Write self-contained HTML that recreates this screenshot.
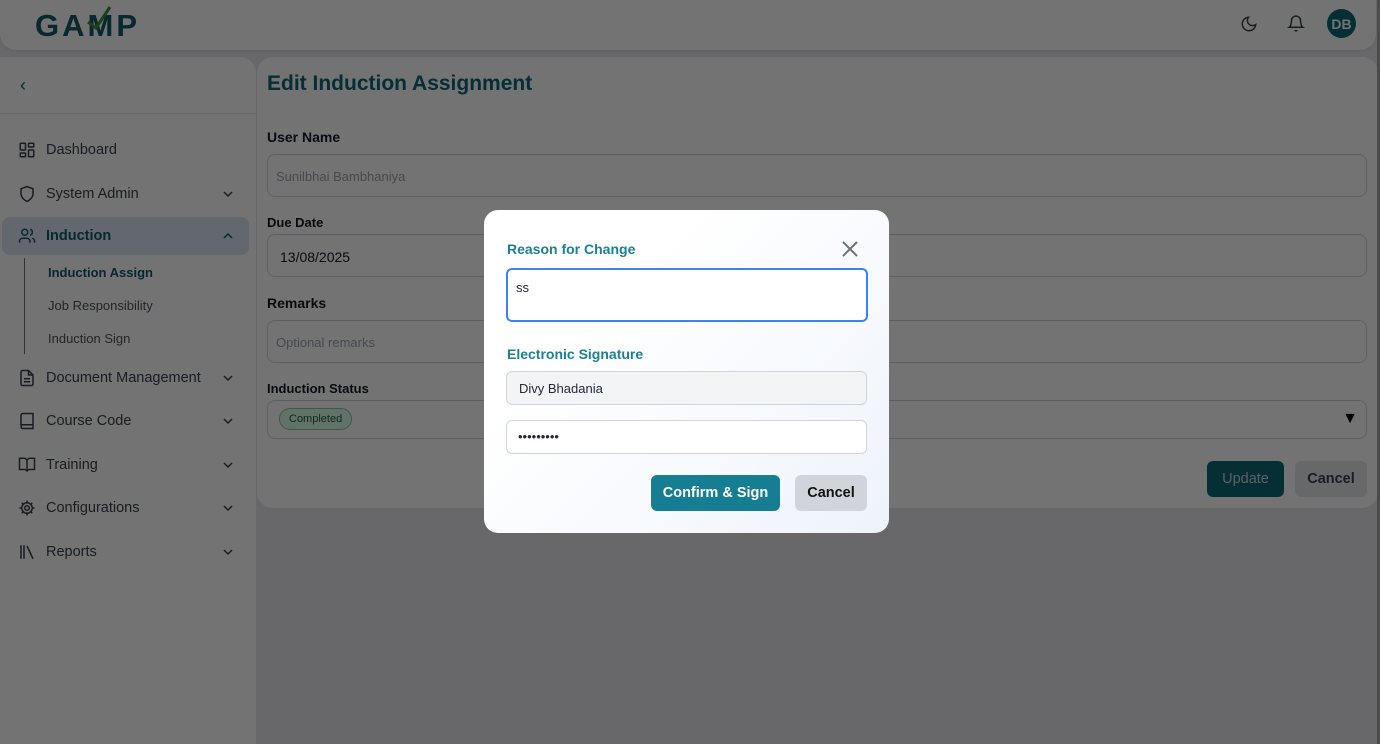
<!DOCTYPE html>
<html><head><meta charset="utf-8"><style>
*{box-sizing:border-box;margin:0;padding:0}
html,body{width:1380px;height:744px;overflow:hidden}
body{background:#e6e7ea;font-family:"Liberation Sans",sans-serif;position:relative;color:#1f2937}
.hdr{position:absolute;left:0;top:0;width:1376px;height:50px;background:#fff;border-radius:0 0 16px 16px;box-shadow:0 1px 3px rgba(0,0,0,.08)}
.logo{position:absolute;left:35px;top:8px;font-size:31px;font-weight:bold;color:#0f5a66;letter-spacing:3px}
.side{position:absolute;left:0;top:57px;width:256px;height:687px;background:#fff;border-radius:0 16px 0 0}
.side .back{position:absolute;left:20px;top:18px;color:#0f5a66;font-size:18px}
.side .sep{position:absolute;left:0;top:56px;width:256px;border-top:1px solid #e5e7eb}
.item{position:absolute;left:2px;width:247px;height:38px;font-size:14.5px;color:#374151;display:flex;align-items:center;padding-left:44px;border-radius:8px}
.item svg.ic{position:absolute;left:16px;top:10px}
.item .chev{position:absolute;right:16px;top:15px}
.act{background:#dbe7f3;color:#0f5a66;font-weight:bold}
.sub{position:absolute;left:48px;font-size:13px;color:#4b5563}
.vline{position:absolute;left:24px;top:258px;height:96px;border-left:1px solid #6b7280}
.card{position:absolute;left:257px;top:57px;width:1121px;height:451px;background:#fff;border-radius:16px}
.title{position:absolute;left:10px;top:15px;font-size:21px;color:#0f6777;font-weight:bold}
.lbl{position:absolute;left:10px;font-size:14px;font-weight:bold;color:#111827}
.inp{position:absolute;left:10px;width:1100px;height:43px;border:1px solid #d1d5db;border-radius:8px;font-size:13px;padding:14px 8px;color:#9ca3af}
.overlay{position:absolute;left:0;top:0;width:1380px;height:744px;background:rgba(0,0,0,.55)}
.modal{position:absolute;left:484px;top:210px;width:405px;height:323px;border-radius:14px;background:linear-gradient(135deg,#fff 30%,#eef3fb);}
.ml{position:absolute;left:23px;font-size:14px;font-weight:bold;color:#1a7f93}
.btn{position:absolute;height:36px;border-radius:6px;font-size:14.5px;font-weight:bold;display:flex;align-items:center;justify-content:center}
.sb{position:absolute;right:0;top:0;width:3px;height:744px;background:#4a4a4a}
</style></head><body>
<div class="hdr">
<div class="logo">GAMP</div>
<svg style="position:absolute;left:84px;top:4px" width="30" height="26"><path d="M4 18 L12 24 L26 3" stroke="#3f8f3a" stroke-width="3" fill="none"/></svg>
<svg style="position:absolute;left:1240px;top:15px" width="18" height="18" viewBox="0 0 24 24" fill="none" stroke="#374151" stroke-width="2"><path d="M21 12.8A9 9 0 1 1 11.2 3a7 7 0 0 0 9.8 9.8z"/></svg>
<svg style="position:absolute;left:1287px;top:14px" width="18" height="19" viewBox="0 0 24 24" fill="none" stroke="#374151" stroke-width="2"><path d="M18 8a6 6 0 0 0-12 0c0 7-3 9-3 9h18s-3-2-3-9M13.7 21a2 2 0 0 1-3.4 0"/></svg>
<div style="position:absolute;left:1327px;top:9px;width:29px;height:29px;border-radius:50%;background:#0f6777;color:#fff;font-size:14px;font-weight:bold;display:flex;align-items:center;justify-content:center">DB</div>
</div>
<div class="side">
<div class="back">‹</div><div class="sep"></div>
</div>
<div class="item" style="top:131px"><svg class="ic" width="18" height="18" viewBox="0 0 24 24" fill="none" stroke="#374151" stroke-width="2"><rect x="3" y="3" width="7" height="9" rx="1"/><rect x="14" y="3" width="7" height="5" rx="1"/><rect x="14" y="12" width="7" height="9" rx="1"/><rect x="3" y="16" width="7" height="5" rx="1"/></svg>Dashboard</div>
<div class="item" style="top:175px"><svg class="ic" width="18" height="18" viewBox="0 0 24 24" fill="none" stroke="#374151" stroke-width="2"><path d="M12 22s8-4 8-10V5l-8-3-8 3v7c0 6 8 10 8 10z"/></svg>System Admin<svg class="chev" width="10" height="8"><path d="M1 2l4 4 4-4" stroke="#374151" fill="none" stroke-width="1.5"/></svg></div>
<div class="item act" style="top:217px"><svg class="ic" width="18" height="18" viewBox="0 0 24 24" fill="none" stroke="#0f5a66" stroke-width="2"><path d="M16 21v-2a4 4 0 0 0-4-4H6a4 4 0 0 0-4 4v2"/><circle cx="9" cy="7" r="4"/><path d="M22 21v-2a4 4 0 0 0-3-3.9M16 3.1a4 4 0 0 1 0 7.8"/></svg>Induction<svg class="chev" width="10" height="8"><path d="M1 6l4-4 4 4" stroke="#0f5a66" fill="none" stroke-width="1.5"/></svg></div>
<div class="vline"></div>
<div class="sub" style="top:265px;color:#0f5a66;font-weight:bold">Induction Assign</div>
<div class="sub" style="top:298px">Job Responsibility</div>
<div class="sub" style="top:331px">Induction Sign</div>
<div class="item" style="top:359px"><svg class="ic" width="18" height="18" viewBox="0 0 24 24" fill="none" stroke="#374151" stroke-width="2"><path d="M14 2H6a2 2 0 0 0-2 2v16a2 2 0 0 0 2 2h12a2 2 0 0 0 2-2V8z"/><path d="M14 2v6h6M16 13H8M16 17H8"/></svg>Document Management<svg class="chev" width="10" height="8"><path d="M1 2l4 4 4-4" stroke="#374151" fill="none" stroke-width="1.5"/></svg></div>
<div class="item" style="top:402px"><svg class="ic" width="18" height="18" viewBox="0 0 24 24" fill="none" stroke="#374151" stroke-width="2"><path d="M4 19.5A2.5 2.5 0 0 1 6.5 17H20V2H6.5A2.5 2.5 0 0 0 4 4.5v15A2.5 2.5 0 0 0 6.5 22H20v-5"/></svg>Course Code<svg class="chev" width="10" height="8"><path d="M1 2l4 4 4-4" stroke="#374151" fill="none" stroke-width="1.5"/></svg></div>
<div class="item" style="top:446px"><svg class="ic" width="18" height="18" viewBox="0 0 24 24" fill="none" stroke="#374151" stroke-width="2"><path d="M2 3h6a4 4 0 0 1 4 4v14a3 3 0 0 0-3-3H2zM22 3h-6a4 4 0 0 0-4 4v14a3 3 0 0 1 3-3h7z"/></svg>Training<svg class="chev" width="10" height="8"><path d="M1 2l4 4 4-4" stroke="#374151" fill="none" stroke-width="1.5"/></svg></div>
<div class="item" style="top:489px"><svg class="ic" width="18" height="18" viewBox="0 0 24 24" fill="none" stroke="#374151" stroke-width="2"><circle cx="12" cy="12" r="3"/><circle cx="12" cy="12" r="7"/><path d="M12 2v3M12 19v3M2 12h3M19 12h3M5 5l2 2M17 17l2 2M5 19l2-2M17 7l2-2"/></svg>Configurations<svg class="chev" width="10" height="8"><path d="M1 2l4 4 4-4" stroke="#374151" fill="none" stroke-width="1.5"/></svg></div>
<div class="item" style="top:533px"><svg class="ic" width="18" height="18" viewBox="0 0 24 24" fill="none" stroke="#374151" stroke-width="2"><path d="M4 3v18M8 3v18M12 4l8 17"/></svg>Reports<svg class="chev" width="10" height="8"><path d="M1 2l4 4 4-4" stroke="#374151" fill="none" stroke-width="1.5"/></svg></div>
<div class="card">
<div class="title">Edit Induction Assignment</div>
<div class="lbl" style="top:72px">User Name</div>
<div class="inp" style="top:97px">Sunilbhai Bambhaniya</div>
<div class="lbl" style="top:158px;font-size:13px">Due Date</div>
<div class="inp" style="top:177px;color:#111827;font-size:14px;padding-left:12px">13/08/2025</div>
<div class="lbl" style="top:238px">Remarks</div>
<div class="inp" style="top:263px">Optional remarks</div>
<div class="lbl" style="top:324px;font-size:13px">Induction Status</div>
<div class="inp" style="top:343px;height:39px;padding:0"><span style="position:absolute;left:11px;top:7px;background:#dcfce7;border:1px solid #86c79b;color:#166534;border-radius:12px;font-size:11px;padding:4px 9px">Completed</span><span style="position:absolute;right:8px;top:9px;color:#000;font-size:16px">▼</span></div>
<div class="btn" style="left:950px;top:404px;width:77px;background:#0f6777;color:#cbd5e1;font-weight:normal">Update</div>
<div class="btn" style="left:1038px;top:404px;width:72px;background:#e5e7eb;color:#374151">Cancel</div>
</div>
<div class="overlay"></div>
<div class="sb"></div>
<div class="modal">
<div class="ml" style="top:31px">Reason for Change</div>
<svg style="position:absolute;left:358px;top:31px" width="16" height="16"><path d="M1 1L15 15M15 1L1 15" stroke="#6b7280" stroke-width="2"/></svg>
<div style="position:absolute;left:22px;top:58px;width:362px;height:54px;border:2px solid #3b82f6;border-radius:6px;background:#fff;font-size:13px;padding:10px 8px">ss</div>
<div class="ml" style="top:136px">Electronic Signature</div>
<div style="position:absolute;left:22px;top:161px;width:361px;height:34px;border:1px solid #d1d5db;border-radius:6px;background:#f3f4f6;font-size:13px;padding:9px 12px">Divy Bhadania</div>
<div style="position:absolute;left:22px;top:210px;width:361px;height:34px;border:1px solid #d1d5db;border-radius:6px;background:#fff;font-size:13px;padding:8px 11px;letter-spacing:0px">•••••••••</div>
<div class="btn" style="left:167px;top:265px;width:129px;background:#167e93;color:#fff">Confirm &amp; Sign</div>
<div class="btn" style="left:311px;top:265px;width:72px;background:#d1d5db;color:#111">Cancel</div>
</div>
</body></html>
